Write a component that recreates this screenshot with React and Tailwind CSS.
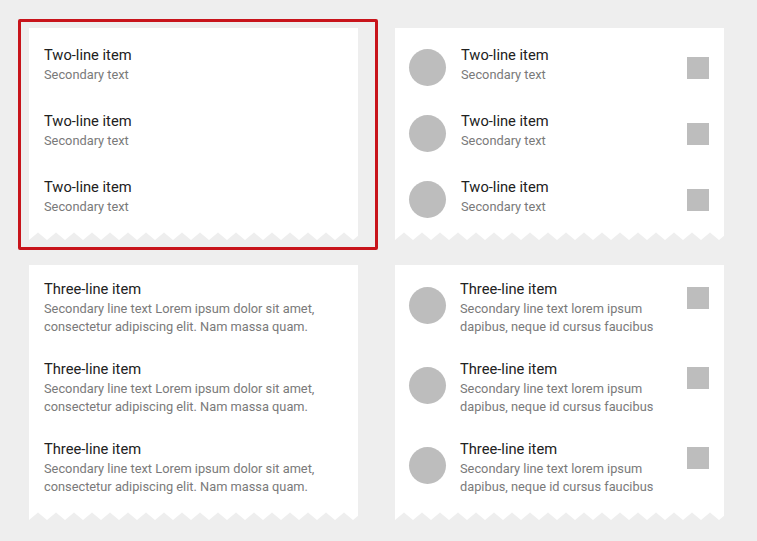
import React from "react";

const font = { fontFamily: "Roboto, 'Noto Sans', Arial, sans-serif" };

function Zigzag({ id }) {
  return (
    <svg className="block w-full h-[8px]" preserveAspectRatio="none">
      <defs>
        <pattern id={id} x="0" y="0" width="18" height="8" patternUnits="userSpaceOnUse">
          <path d="M0 0 L18 0 L18 8 L9 0.5 L0 8 Z" fill="#ffffff" />
        </pattern>
      </defs>
      <rect x="0" y="0" width="100%" height="8" fill={`url(#${id})`} />
    </svg>
  );
}

function Circle() {
  return <div className="w-[37px] h-[37px] rounded-full bg-[#bdbdbd] shrink-0" />;
}

function Square() {
  return <div className="w-[22px] h-[22px] bg-[#bdbdbd] shrink-0" />;
}

function TwoLine({ withIcons }) {
  return (
    <div className="w-[329px] flex flex-col">
      <div className="bg-white pt-[17px] pb-[15px] flex flex-col gap-[26px]">
        {[0, 1, 2].map((i) => (
          <div key={i} className={withIcons ? "h-[40px] flex items-start pl-[14px] pr-[15px]" : "h-[40px] flex items-start pl-[15px]"}>
            {withIcons && (
              <div className="mt-[4px] mr-[15px]">
                <Circle />
              </div>
            )}
            <div className="flex-1 flex flex-col">
              <div className="text-[14.7px] leading-[20px] text-[#212121]">Two-line item</div>
              <div className="text-[12.8px] leading-[20px] text-[#7a7a7a]">Secondary text</div>
            </div>
            {withIcons && (
              <div className="mt-[12px]">
                <Square />
              </div>
            )}
          </div>
        ))}
      </div>
      <Zigzag id={withIcons ? "zz2" : "zz1"} />
    </div>
  );
}

function ThreeLine({ withIcons }) {
  return (
    <div className="w-[329px] flex flex-col">
      <div className="bg-white pt-[13px] pb-[16px] flex flex-col gap-[22px]">
        {[0, 1, 2].map((i) => (
          <div key={i} className={withIcons ? "h-[58px] flex items-start pl-[14px] pr-[15px]" : "h-[58px] flex items-start pl-[15px]"}>
            {withIcons && (
              <div className="mt-[9px] mr-[14px]">
                <Circle />
              </div>
            )}
            <div className="flex-1 flex flex-col">
              <div className="text-[14.7px] leading-[22px] text-[#212121]">Three-line item</div>
              {withIcons ? (
                <div className="text-[12.8px] leading-[18px] text-[#7a7a7a]">
                  Secondary line text lorem ipsum
                  <br />
                  dapibus, neque id cursus faucibus
                </div>
              ) : (
                <div className="text-[12.8px] leading-[18px] text-[#7a7a7a]">
                  Secondary line text Lorem ipsum dolor sit amet,
                  <br />
                  consectetur adipiscing elit. Nam massa quam.
                </div>
              )}
            </div>
            {withIcons && (
              <div className="mt-[9px]">
                <Square />
              </div>
            )}
          </div>
        ))}
      </div>
      <Zigzag id={withIcons ? "zz4" : "zz3"} />
    </div>
  );
}

export default function App() {
  return (
    <div className="w-[757px] h-[541px] bg-[#eeeeee] overflow-hidden pl-[29px] pt-[28px]" style={font}>
      <div className="grid grid-cols-[329px_329px] gap-x-[37px] gap-y-[25px] items-start">
        <div className="relative">
          <TwoLine withIcons={false} />
          <div className="absolute left-[-11px] right-[-20px] top-[-9px] bottom-[-10px] border-[3px] border-[#c8141b] rounded-[2px] pointer-events-none" />
        </div>
        <TwoLine withIcons={true} />
        <ThreeLine withIcons={false} />
        <ThreeLine withIcons={true} />
      </div>
    </div>
  );
}
